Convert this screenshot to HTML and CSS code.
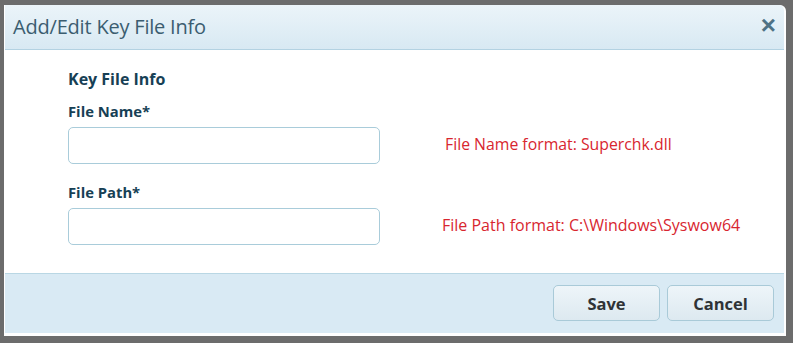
FILE: index.html
```html
<!DOCTYPE html>
<html lang="en">
<head>
    <meta charset="UTF-8">
    <title>Add/Edit Key File Info</title>
    <link rel="stylesheet" href="styles.css">
</head>
<body>
    <div class="modal">
        <div class="modal-header">
            <h3>Add/Edit Key File Info</h3>
            <button class="close" type="button">&times;</button>
        </div>

        <div class="modal-body">
            <h4>Key File Info</h4>
            <div class="field">
                <label for="fileName">File Name*</label>
                <div class="row">
                    <input type="text" id="fileName">
                    <span class="hint">File Name format: Superchk.dll</span>
                </div>
            </div>
            <div class="field">
                <label for="filePath">File Path*</label>
                <div class="row">
                    <input type="text" id="filePath">
                    <span class="hint hint-path">File Path format: C:\Windows\Syswow64</span>
                </div>
            </div>
        </div>

        <div class="modal-footer">
            <button class="btn" type="button">Save</button>
            <button class="btn" type="button">Cancel</button>
        </div>
    </div>
</body>
</html>
```

FILE: styles.css
```css
html, body {
    margin: 0;
    padding: 0;
}
body {
    font-family: "Open Sans", Arial, sans-serif;
    background-color: #6c6c6c;
    width: 793px;
    height: 343px;
    padding: 5px 0 0 4px;
    box-sizing: border-box;
}
.modal {
    width: 782px;
    height: 331px;
    background-color: #fff;
    border-radius: 0 6px 0 0;
    padding: 0 2px 3px 1px;
    box-sizing: border-box;
    display: flex;
    flex-direction: column;
}
.modal-header {
    height: 45px;
    box-sizing: border-box;
    display: flex;
    align-items: center;
    justify-content: space-between;
    padding: 0 4px 0 8px;
    background: linear-gradient(#ebf4f9, #d8e9f3);
    border-bottom: 1px solid #b3d2e2;
    border-radius: 0 5px 0 0;
}
.modal-header h3 {
    margin: 0 0 1px;
    font-size: 20px;
    font-weight: normal;
    color: #3b5d70;
    letter-spacing: -0.2px;
}
.close {
    border: none;
    background: none;
    font-family: Arial, sans-serif;
    font-size: 26px;
    font-weight: bold;
    line-height: 1;
    color: #4e7285;
    padding: 0 4px 4px 0;
    cursor: pointer;
}
.modal-body {
    flex: 1;
    padding: 17px 0 0 63px;
}
.modal-body h4 {
    margin: 0 0 10px;
    font-size: 16px;
    color: #173f55;
    line-height: 24px;
}
.field label {
    display: block;
    font-size: 14.8px;
    font-weight: bold;
    color: #173f55;
    line-height: 21px;
    margin-bottom: 5px;
}
.field + .field {
    margin-top: 18px;
}
.row {
    display: flex;
    align-items: center;
}
.row input {
    width: 312px;
    height: 37px;
    box-sizing: border-box;
    border: 1px solid #a9ccda;
    border-radius: 5px;
    padding: 6px 10px;
}
.hint {
    color: #d8262f;
    font-size: 15.8px;
    margin-left: 65px;
    margin-top: -3px;
}
.hint-path {
    margin-left: 62px;
    font-size: 16px;
}
.modal-footer {
    height: 60px;
    box-sizing: border-box;
    background-color: #d9eaf4;
    border-top: 1px solid #b9d7e4;
    display: flex;
    justify-content: flex-end;
    align-items: center;
    gap: 7px;
    padding: 0 10px 1px 0;
}
.btn {
    width: 107px;
    height: 36px;
    font-family: "Open Sans", Arial, sans-serif;
    font-size: 16.5px;
    font-weight: bold;
    color: #2f3336;
    background: linear-gradient(#eef5f9, #dde9f0);
    border: 1px solid #a9cad8;
    border-radius: 5px;
    cursor: pointer;
}
```
